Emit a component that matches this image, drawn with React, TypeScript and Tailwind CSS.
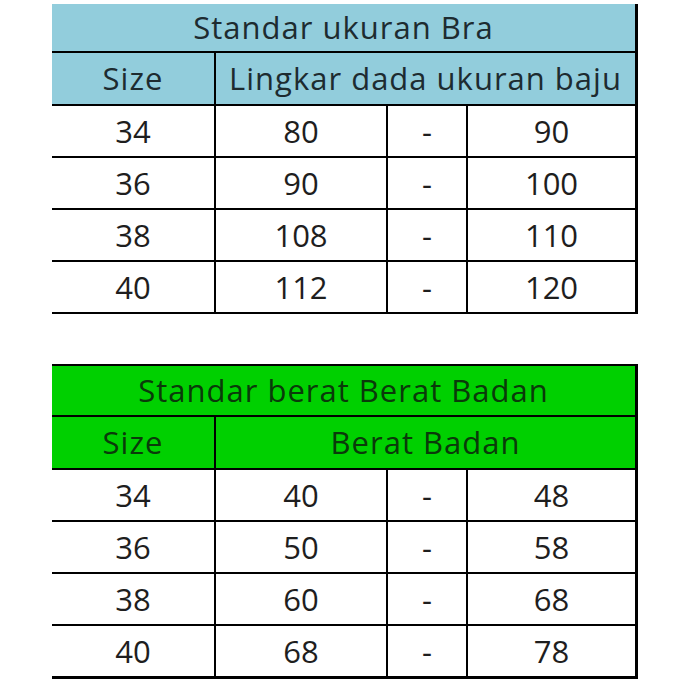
const font = { fontFamily: '"Open Sans", Lato, sans-serif' };

type Row = [string, string, string];

const braRows: Row[] = [
  ['34', '80', '90'],
  ['36', '90', '100'],
  ['38', '108', '110'],
  ['40', '112', '120'],
];

const weightRows: Row[] = [
  ['34', '40', '48'],
  ['36', '50', '58'],
  ['38', '60', '68'],
  ['40', '68', '78'],
];

function DataRow({ row, last }: { row: Row; last?: boolean }) {
  return (
    <div
      className={`grid grid-cols-[164px_172px_80px_1fr] h-[52px] border-black ${
        last ? 'border-b-[3px] h-[53px]' : 'border-b-2'
      }`}
    >
      <div className="flex items-center justify-center border-r-2 border-black">{row[0]}</div>
      <div className="flex items-center justify-center border-r-2 border-black">{row[1]}</div>
      <div className="flex items-center justify-center border-r-2 border-black">-</div>
      <div className="flex items-center justify-center">{row[2]}</div>
    </div>
  );
}

function SizeTable({
  title,
  subtitle,
  rows,
  head,
  headText,
  topBorder,
}: {
  title: string;
  subtitle: string;
  rows: Row[];
  head: string;
  headText: string;
  topBorder?: boolean;
}) {
  return (
    <div className="w-[586px] border-r-[3px] border-black">
      <div
        className={`${head} ${headText} tracking-[1px] flex items-center justify-center border-b-2 border-black ${
          topBorder ? 'h-[53px] border-t-2' : 'h-[49px]'
        }`}
      >
        {title}
      </div>
      <div
        className={`${head} ${headText} tracking-[1px] grid grid-cols-[164px_1fr] h-[53px] border-b-2 border-black`}
      >
        <div className="flex items-center justify-center border-r-2 border-black">Size</div>
        <div className="flex items-center justify-center">{subtitle}</div>
      </div>
      {rows.map((r, i) => (
        <DataRow key={r[0]} row={r} last={topBorder && i === rows.length - 1} />
      ))}
    </div>
  );
}

export default function App() {
  return (
    <div
      className="w-[688px] h-[688px] bg-white text-[#1e1e1e] text-[31px] font-medium leading-none"
      style={font}
    >
      <div className="pt-[4px] pl-[52px] flex flex-col gap-[50px]">
        <SizeTable
          title="Standar ukuran Bra"
          subtitle="Lingkar dada ukuran baju"
          rows={braRows}
          head="bg-[#92cddc]"
          headText="text-[#1d2b30]"
        />
        <SizeTable
          title="Standar berat Berat Badan"
          subtitle="Berat Badan"
          rows={weightRows}
          head="bg-[#00d000]"
          headText="text-[#0a3a0a]"
          topBorder
        />
      </div>
    </div>
  );
}
